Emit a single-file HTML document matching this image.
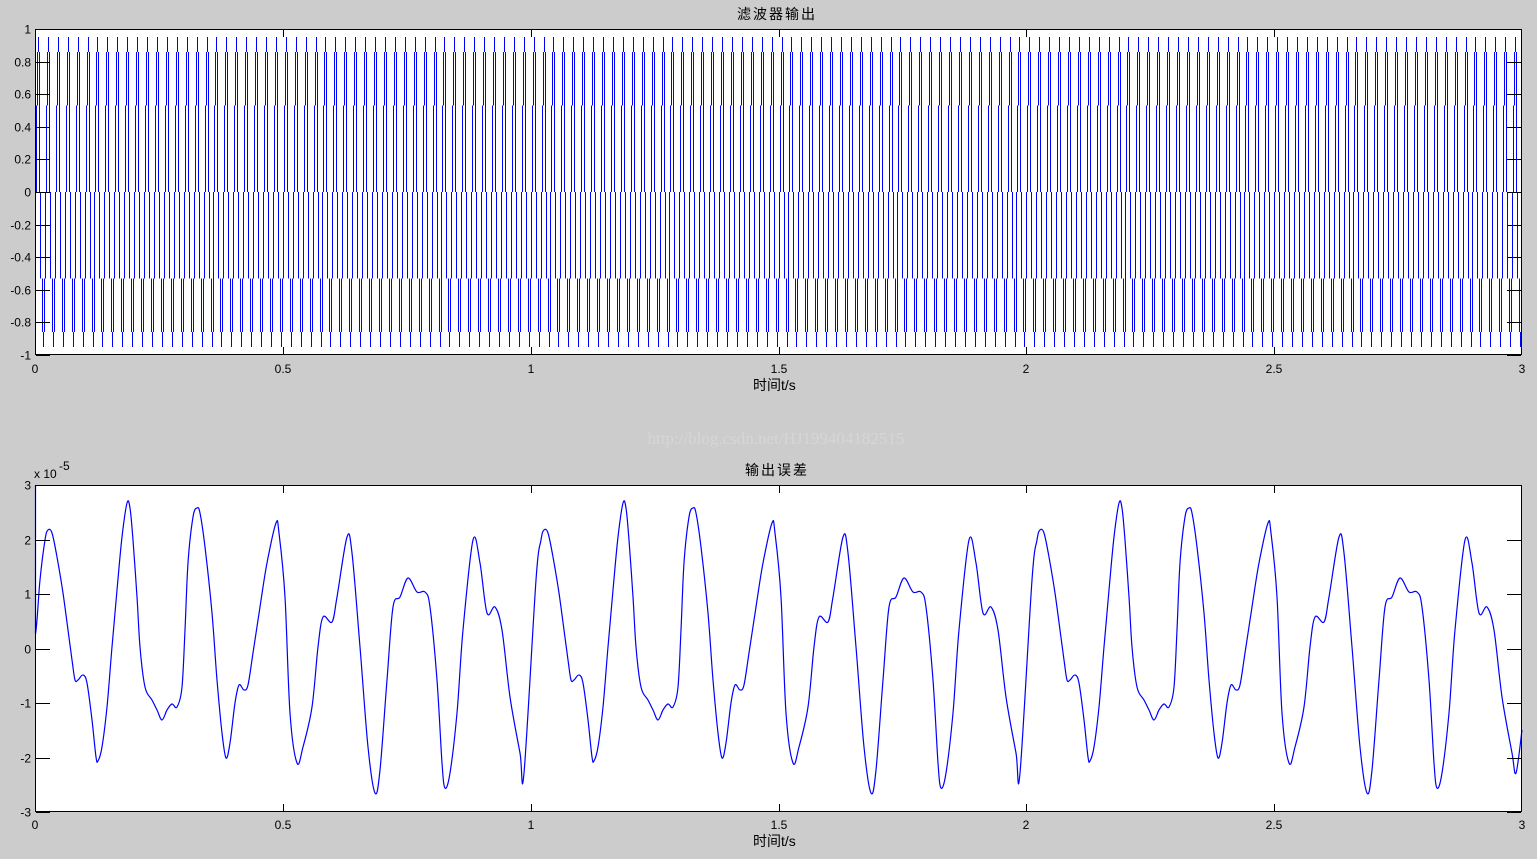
<!DOCTYPE html>
<html><head><meta charset="utf-8"><style>
html,body{margin:0;padding:0;background:#cccccc;}
svg{display:block;}
text{font-family:"Liberation Sans","Noto Sans CJK SC",sans-serif;font-size:12px;fill:#000;}
</style></head><body>
<svg id="s" width="1537" height="859" xmlns="http://www.w3.org/2000/svg">
<rect x="35" y="29" width="1487" height="326" fill="#fff"/>
<rect x="35" y="485" width="1487" height="327" fill="#fff"/>
<g id="tg" stroke="#0000ff" stroke-width="1" shape-rendering="crispEdges"></g>
<path id="bot" fill="none" stroke="#0000ff" stroke-width="1.2"/>
<g id="ax" stroke="#000" stroke-width="1" shape-rendering="crispEdges" fill="none">
<rect x="35.5" y="29.5" width="1486" height="325"/>
<rect x="35.5" y="485.5" width="1486" height="326"/>
</g>
<g id="lbl"></g>
<text x="737" y="19" style="font-size:14px;letter-spacing:2px">滤波器输出</text>
<text x="745" y="475" style="font-size:14px;letter-spacing:2px">输出误差</text>
<text x="753" y="390" style="font-size:14px">时间t/s</text>
<text x="753" y="846" style="font-size:14px">时间t/s</text>
<text x="34" y="478" font-size="12">x 10</text><text x="59" y="470" font-size="8">-5</text>
<text x="776" y="444" text-anchor="middle" style="font-family:'Liberation Serif',serif;font-size:17px;fill:#d6d6d6">http://blog.csdn.net/HJ199404182515</text>
</svg>
<script>
(function(){
var NS="http://www.w3.org/2000/svg";
function el(p,n,a,t){var e=document.createElementNS(NS,n);for(var k in a)e.setAttribute(k,a[k]);if(t!=null)e.textContent=t;p.appendChild(e);return e;}
var tg=document.getElementById('tg');
function ty(v){return 192-v*163;}
var P=1487/150;
var segs=[[0,0.95,0.86],[-1,0.86,0.53],[1,0.86,0.53],[-2,0.53,0],[1,0.53,0],[-3,0,-0.53],[2,0,-0.53],[4,-0.53,-0.86],[6,-0.53,-0.86],[5,-0.86,-0.95]];
var d="";
for(var i=0;i<152;i++){var c=Math.round(38+i*P);
 segs.forEach(function(s){var x=c+s[0];if(x<36||x>1521)return;d+="M"+(x+0.5)+" "+ty(s[1])+"V"+ty(s[2]);});}
el(tg,'path',{d:d,fill:'none'});
var pts=[[34,634],[37,620],[40,580],[45,540],[48,530],[52,533],[57,557],[63,593],[68,630],[72,660],[75,680],[78,680],[83,675],[87,683],[92,720],[96,757],[98,761],[102,747],[107,707],[112,647],[117,590],[122,537],[127,503],[130,508],[133,540],[137,597],[140,647],[145,687],[152,700],[157,710],[162,720],[167,710],[172,704],[177,707],[182,687],[185,630],[188,563],[193,517],[197,508],[200,513],[205,547],[212,613],[217,680],[222,733],[226,758],[230,743],[235,703],[239,685],[244,690],[248,685],[253,653],[260,607],[267,563],[276,523],[279,533],[285,597],[290,713],[297,763],[303,747],[312,707],[318,647],[323,617],[332,622],[337,597],[347,537],[352,553],[360,647],[368,747],[375,793],[380,770],[387,680],[393,607],[400,597],[408,578],[417,592],[425,592],[430,607],[437,680],[442,763],[445,788],[450,773],[457,713],[463,630],[473,540],[480,563],[487,613],[495,607],[502,630],[510,697],[520,753],[524,773],[530,730]];
var all=[];
for(var p=0;p<3;p++){pts.forEach(function(q,j){if(p>0&&j<2)return; if(p<2&&q[0]>=530)return; all.push([q[0]+p*496,q[1]]);});}
all[0]=[35.5,634];
var pd="M35.5 485L35.5 634";
for(var i=0;i<all.length-1;i++){
 var p0=all[Math.max(0,i-1)],p1=all[i],p2=all[i+1],p3=all[Math.min(all.length-1,i+2)];
 var c1x=p1[0]+(p2[0]-p0[0])/6,c1y=p1[1]+(p2[1]-p0[1])/6,c2x=p2[0]-(p3[0]-p1[0])/6,c2y=p2[1]-(p3[1]-p1[1])/6;
 pd+="C"+c1x.toFixed(1)+" "+c1y.toFixed(1)+" "+c2x.toFixed(1)+" "+c2y.toFixed(1)+" "+p2[0]+" "+p2[1];}
document.getElementById('bot').setAttribute('d',pd);
var ax=document.getElementById('ax'),lbl=document.getElementById('lbl');
var xs=[35,283,531,779,1026,1274,1522],xl=["0","0.5","1","1.5","2","2.5","3"];
xs.forEach(function(x,i){var X=(i==6?1521.5:x+0.5);
 el(ax,'path',{d:"M"+X+" 30V37M"+X+" 354V347M"+X+" 486V493M"+X+" 811V804"});
 el(lbl,'text',{x:x,y:373,'text-anchor':'middle'},xl[i]);
 el(lbl,'text',{x:x,y:829,'text-anchor':'middle'},xl[i]);});
var tl=["1","0.8","0.6","0.4","0.2","0","-0.2","-0.4","-0.6","-0.8","-1"];
for(var i=0;i<11;i++){var y=Math.round(29+i*32.6)+0.5;
 el(ax,'path',{d:"M36 "+y+"H50M1521 "+y+"H1507"});
 el(lbl,'text',{x:31,y:y+4,'text-anchor':'end'},tl[i]);}
var bl=["3","2","1","0","-1","-2","-3"];
for(var i=0;i<7;i++){var y=Math.round(485+i*54.5)+0.5;
 el(ax,'path',{d:"M36 "+y+"H50M1521 "+y+"H1507"});
 el(lbl,'text',{x:31,y:y+4,'text-anchor':'end'},bl[i]);}
})();
</script>
</body></html>
